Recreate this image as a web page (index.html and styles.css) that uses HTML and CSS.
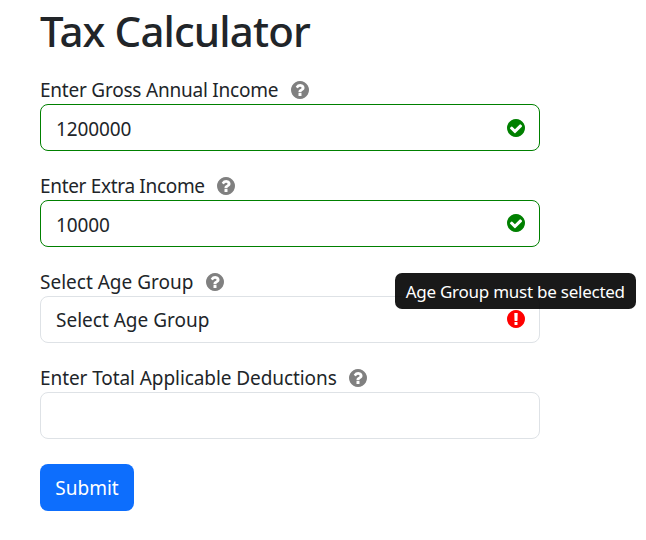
FILE: index.html
```html
<!DOCTYPE html>
<html lang="en">
<head>
<meta charset="utf-8">
<title>Tax Calculator</title>
<link rel="stylesheet" href="styles.css">
</head>
<body>
<svg class="sprite" aria-hidden="true">
  <symbol id="question" viewBox="128 128 1536 1536"><path d="M1024 1376v-192q0-14-9-23t-23-9h-192q-14 0-23 9t-9 23v192q0 14 9 23t23 9h192q14 0 23-9t9-23zm256-672q0-88-55.5-163t-138.5-116-170-41q-243 0-371 213-15 24 8 42l132 100q7 6 19 6 16 0 25-12 53-68 86-92 34-24 86-24 48 0 85.5 26t37.5 59q0 38-20 61t-68 45q-63 28-115.5 86.5t-52.5 125.5v36q0 14 9 23t23 9h192q14 0 23-9t9-23q0-19 21.5-49.5t54.5-49.5q32-18 49-28.5t46-35 44.5-48 28-60.5 12.5-81zm384 192q0 209-103 385.5t-279.5 279.5-385.5 103-385.5-103-279.5-279.5-103-385.5 103-385.5 279.5-279.5 385.5-103 385.5 103 279.5 279.5 103 385.5z"/></symbol>
  <symbol id="check" viewBox="128 128 1536 1536"><path d="M1412 734q0-28-18-46l-91-90q-19-19-45-19t-45 19l-408 407-226-226q-19-19-45-19t-45 19l-91 90q-18 18-18 46 0 27 18 45l362 362q19 19 45 19 27 0 46-19l543-543q18-18 18-45zm252 162q0 209-103 385.5t-279.5 279.5-385.5 103-385.5-103-279.5-279.5-103-385.5 103-385.5 279.5-279.5 385.5-103 385.5 103 279.5 279.5 103 385.5z"/></symbol>
  <symbol id="alert" viewBox="128 128 1536 1536"><path d="M896 128q209 0 385.5 103t279.5 279.5 103 385.5-103 385.5-279.5 279.5-385.5 103-385.5-103-279.5-279.5-103-385.5 103-385.5 279.5-279.5 385.5-103zm128 1247v-190q0-14-9-23.5t-22-9.5h-192q-13 0-23 10t-10 23v190q0 13 10 23t23 10h192q13 0 22-9.5t9-23.5zm-2-344l18-621q0-12-10-18-10-8-24-8h-220q-14 0-24 8-10 6-10 18l17 621q0 10 10 17.5t24 7.5h185q14 0 23.5-7.5t10.5-17.5z"/></symbol>
</svg>
<main class="form">
  <h1 class="title">Tax Calculator</h1>
  <div class="field">
    <div class="label"><span class="t-gross">Enter Gross Annual Income</span><svg class="icon"><use href="#question"/></svg></div>
    <div class="control valid"><span class="value">1200000</span><svg class="icon"><use href="#check"/></svg></div>
  </div>
  <div class="field">
    <div class="label"><span class="t-extra">Enter Extra Income</span><svg class="icon"><use href="#question"/></svg></div>
    <div class="control valid raised"><span class="value">10000</span><svg class="icon"><use href="#check"/></svg></div>
  </div>
  <div class="field">
    <div class="label"><span class="t-age">Select Age Group</span><svg class="icon"><use href="#question"/></svg></div>
    <div class="control invalid raised"><span class="t-age">Select Age Group</span><svg class="icon"><use href="#alert"/></svg>
      <div class="tooltip" role="tooltip">Age Group must be selected</div>
    </div>
  </div>
  <div class="field">
    <div class="label"><span class="t-deduct">Enter Total Applicable Deductions</span><svg class="icon"><use href="#question"/></svg></div>
    <div class="control"></div>
  </div>
  <button class="submit" type="button">Submit</button>
</main>
</body>
</html>
```
FILE: styles.css
```css
* { box-sizing: border-box; }
body {
  margin: 0;
  background: #fff;
  color: #212529;
  font-family: "Segoe UI", "Noto Sans", sans-serif;
  font-size: 19px;
  line-height: 30px;
}
.sprite { position: absolute; width: 0; height: 0; }
.form { width: 500px; margin-left: 40px; padding-top: 1px; }
.title {
  margin: 0 0 14px;
  font-size: 42px;
  line-height: 60px;
  font-weight: 500;
  letter-spacing: -.85px;
  white-space: nowrap;
}
.field { margin-bottom: 20px; }
.label { display: flex; align-items: center; gap: 12.4px; height: 29px; white-space: nowrap; }
.label .icon { color: gray; }
.t-gross { letter-spacing: -.22px; }
.t-extra { letter-spacing: -.32px; }
.t-age { letter-spacing: 0; }
.t-deduct { letter-spacing: -.08px; }
.icon { width: 18px; height: 18px; flex: none; fill: currentColor; }
.control {
  position: relative;
  display: flex;
  align-items: center;
  justify-content: space-between;
  height: 47px;
  padding: 0 14px 0 15px;
  border: 1px solid #dee2e6;
  border-radius: 8px;
}
.raised .icon { margin-bottom: 2px; }
.value { padding-top: 2px; letter-spacing: -.1px; }
.valid { border-color: green; }
.valid .icon { color: green; }
.invalid .icon { color: red; }
.tooltip {
  position: absolute;
  left: 354px;
  top: -24px;
  width: 240.5px;
  height: 36px;
  border-radius: 7px;
  background: rgba(0, 0, 0, .9);
  color: #fff;
  font-size: 17px;
  letter-spacing: -.25px;
  line-height: 37px;
  text-align: center;
  white-space: nowrap;
}
.submit {
  display: block;
  width: 94px;
  height: 47px;
  margin-top: 25px;
  padding: 0;
  border: 0;
  border-radius: 8px;
  background: #0d6efd;
  color: #fff;
  font: inherit;
}
```
